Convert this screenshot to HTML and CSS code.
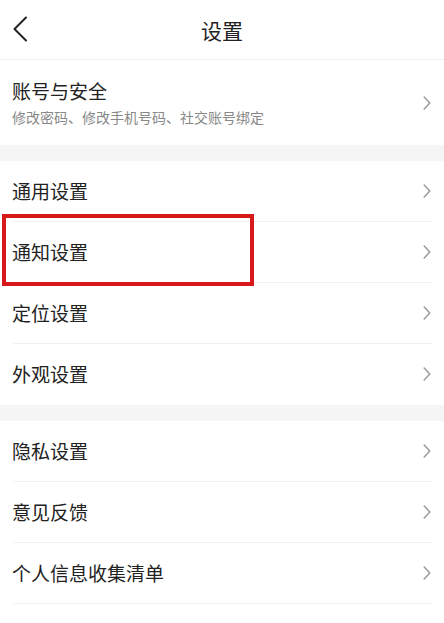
FILE: index.html
```html
<!DOCTYPE html>
<html lang="zh-CN">
<head>
<meta charset="utf-8">
<title>设置</title>
<link rel="stylesheet" href="styles.css">
</head>
<body>
<div class="page">
  <header class="topbar">
    <svg class="back" width="16" height="26" viewBox="0 0 16 26"><polyline points="14,1.5 2.5,13 14,24.5" fill="none" stroke="#222" stroke-width="2" stroke-linecap="round" stroke-linejoin="round"/></svg>
    <h1 class="title">设置</h1>
  </header>

  <section class="group">
    <div class="row row-account">
      <div class="texts">
        <div class="label">账号与安全</div>
        <div class="sub">修改密码、修改手机号码、社交账号绑定</div>
      </div>
      <svg class="chev" width="8" height="14" viewBox="0 0 8 14"><polyline points="1.2,1 6.8,7 1.2,13" fill="none" stroke="#9a9a9a" stroke-width="1.5" stroke-linecap="round" stroke-linejoin="round"/></svg>
    </div>
  </section>

  <div class="gap"></div>

  <section class="group">
    <div class="row"><span class="label">通用设置</span><svg class="chev" width="8" height="14" viewBox="0 0 8 14"><polyline points="1.2,1 6.8,7 1.2,13" fill="none" stroke="#9a9a9a" stroke-width="1.5" stroke-linecap="round" stroke-linejoin="round"/></svg></div>
    <div class="row highlighted"><span class="label">通知设置</span><svg class="chev" width="8" height="14" viewBox="0 0 8 14"><polyline points="1.2,1 6.8,7 1.2,13" fill="none" stroke="#9a9a9a" stroke-width="1.5" stroke-linecap="round" stroke-linejoin="round"/></svg><span class="mark"></span></div>
    <div class="row"><span class="label">定位设置</span><svg class="chev" width="8" height="14" viewBox="0 0 8 14"><polyline points="1.2,1 6.8,7 1.2,13" fill="none" stroke="#9a9a9a" stroke-width="1.5" stroke-linecap="round" stroke-linejoin="round"/></svg></div>
    <div class="row last"><span class="label">外观设置</span><svg class="chev" width="8" height="14" viewBox="0 0 8 14"><polyline points="1.2,1 6.8,7 1.2,13" fill="none" stroke="#9a9a9a" stroke-width="1.5" stroke-linecap="round" stroke-linejoin="round"/></svg></div>
  </section>

  <div class="gap"></div>

  <section class="group">
    <div class="row"><span class="label">隐私设置</span><svg class="chev" width="8" height="14" viewBox="0 0 8 14"><polyline points="1.2,1 6.8,7 1.2,13" fill="none" stroke="#9a9a9a" stroke-width="1.5" stroke-linecap="round" stroke-linejoin="round"/></svg></div>
    <div class="row"><span class="label">意见反馈</span><svg class="chev" width="8" height="14" viewBox="0 0 8 14"><polyline points="1.2,1 6.8,7 1.2,13" fill="none" stroke="#9a9a9a" stroke-width="1.5" stroke-linecap="round" stroke-linejoin="round"/></svg></div>
    <div class="row"><span class="label">个人信息收集清单</span><svg class="chev" width="8" height="14" viewBox="0 0 8 14"><polyline points="1.2,1 6.8,7 1.2,13" fill="none" stroke="#9a9a9a" stroke-width="1.5" stroke-linecap="round" stroke-linejoin="round"/></svg></div>
    <div class="row"></div>
  </section>
</div>
</body>
</html>
```

FILE: styles.css
```css
* { box-sizing: border-box; }
html, body { margin: 0; padding: 0; background: #fff; }
body {
  font-family: "Noto Sans CJK SC", "Noto Sans", sans-serif;
  color: #222;
  overflow: hidden;
}
.page { width: 444px; }

.topbar {
  position: relative;
  height: 60px;
  display: flex;
  align-items: center;
  justify-content: center;
  border-bottom: 1px solid #f0f0f0;
}
.back {
  position: absolute;
  left: 12px;
  top: 16px;
}
.title {
  margin: 0;
  font-size: 21px;
  font-weight: 400;
  line-height: 28px;
  color: #222;
}

.gap { height: 16px; background: #f5f5f5; }

.row {
  position: relative;
  height: 61px;
  padding: 0 13px 1px 12px;
  display: flex;
  align-items: center;
  justify-content: space-between;
}
.row::after {
  content: "";
  position: absolute;
  left: 13px;
  right: 12px;
  bottom: 0;
  height: 1px;
  background: #f0f0f0;
}
.row.last::after, .row-account::after { display: none; }

.label { font-size: 19px; line-height: 26px; color: #222; }

.row-account {
  height: 85px;
  padding-top: 0;
  padding-bottom: 0;
}
.texts { display: flex; flex-direction: column; }
.sub { margin-top: 3px; font-size: 14px; line-height: 20px; color: #888; }

.chev { flex: none; }

.mark {
  position: absolute;
  z-index: 2;
  left: 2px;
  top: -8px;
  width: 252px;
  height: 72px;
  border: 4px solid #d8191c;
  pointer-events: none;
}
```
